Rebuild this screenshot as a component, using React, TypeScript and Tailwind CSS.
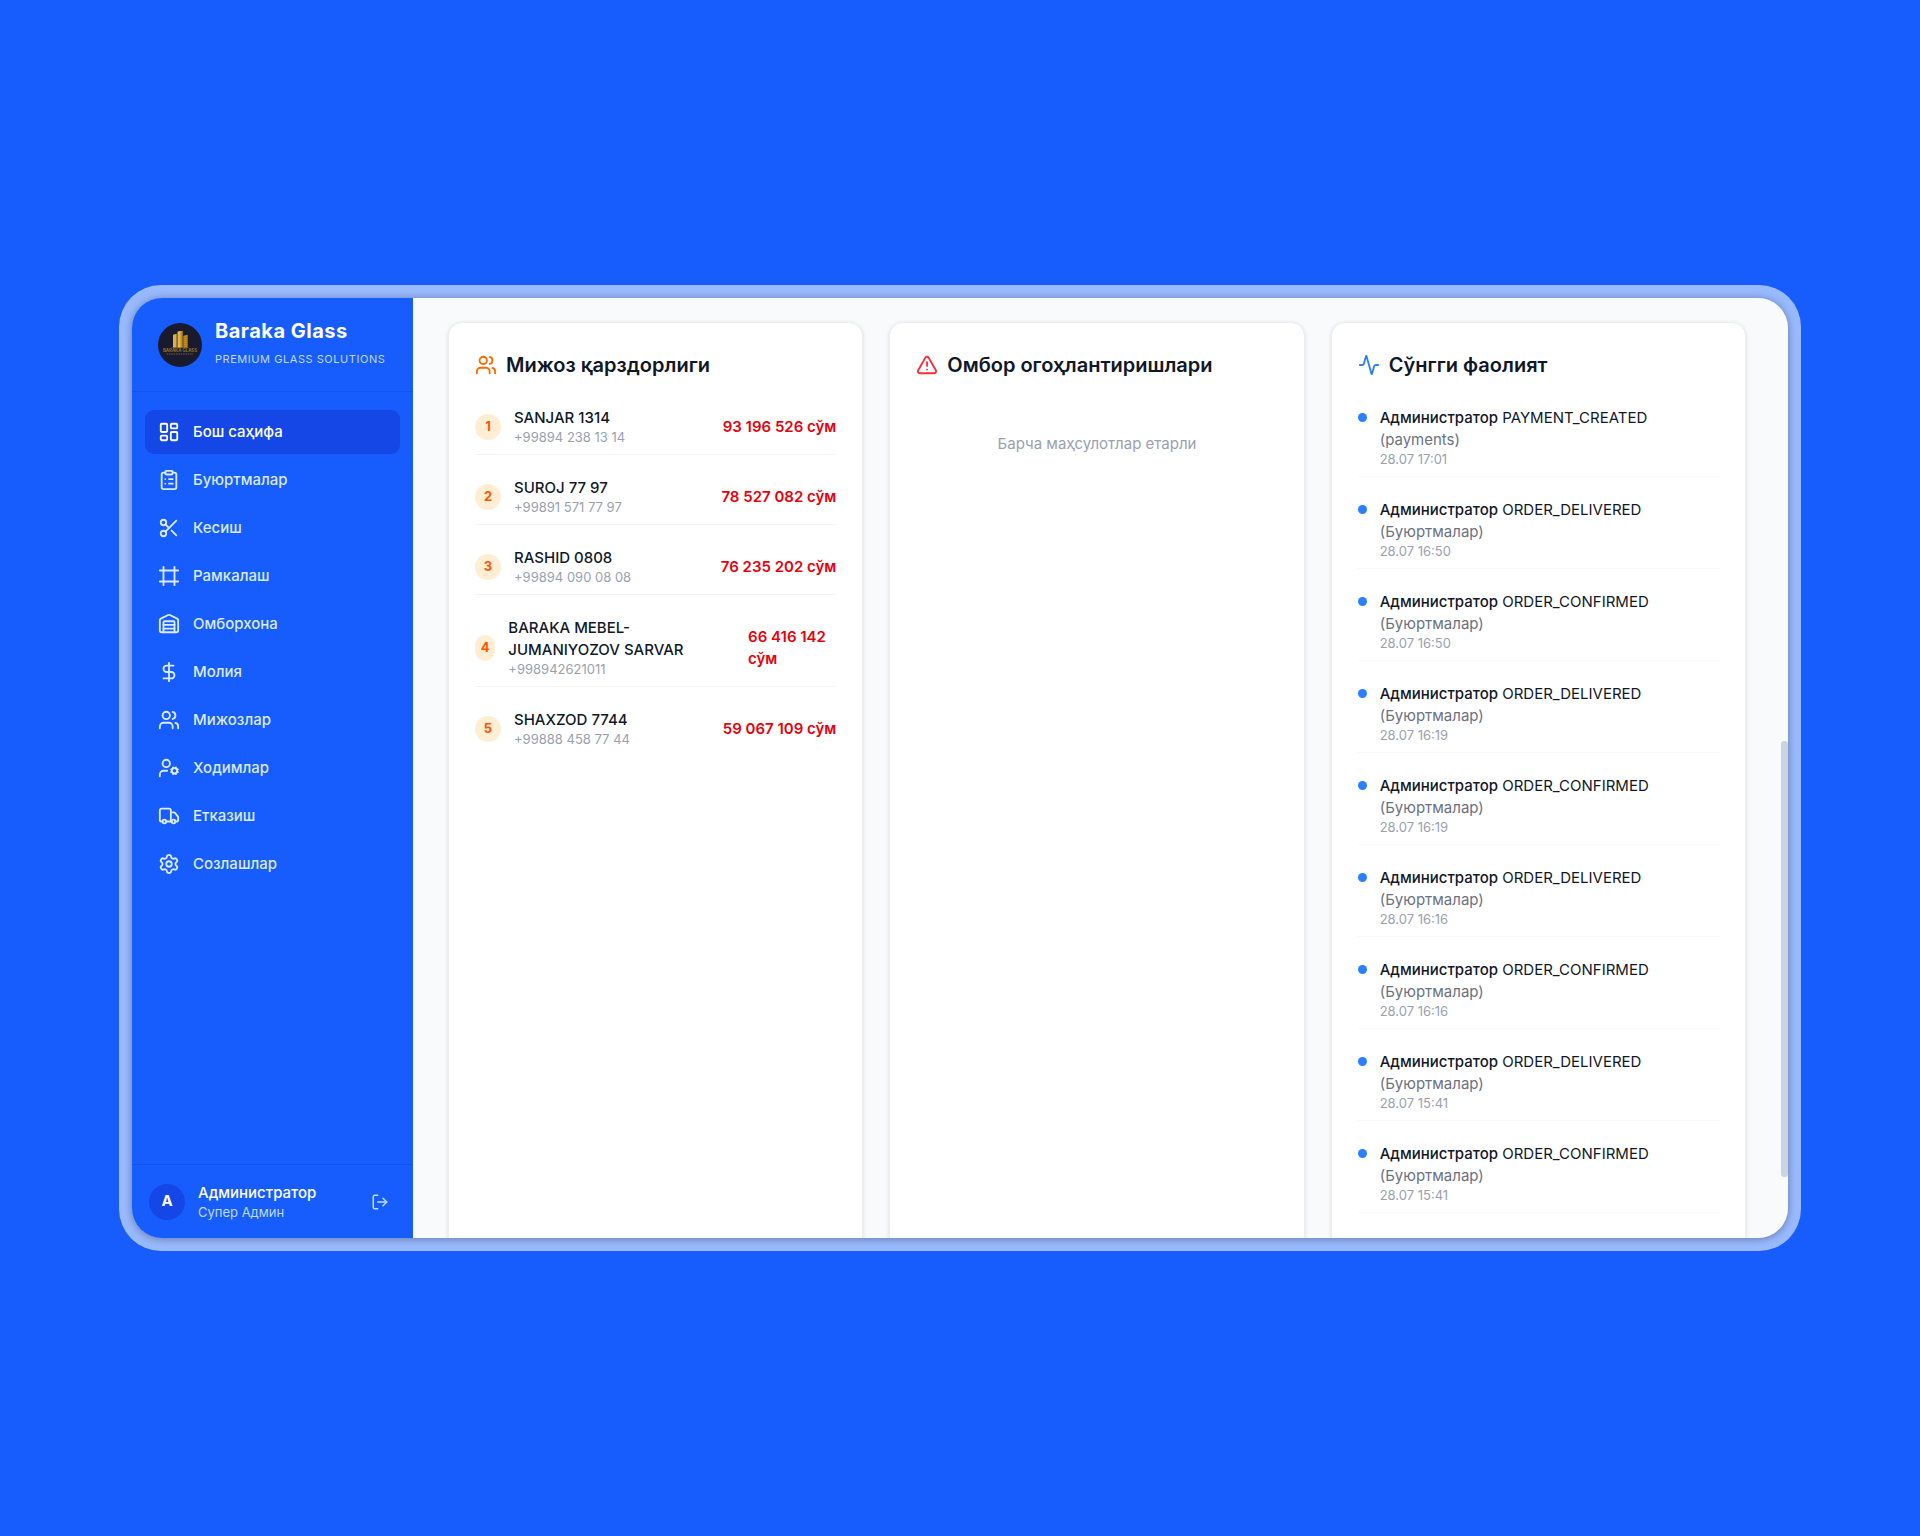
import {
  Activity,
  ClipboardList,
  DollarSign,
  Frame,
  LayoutDashboard,
  LogOut,
  Scissors,
  Settings,
  TriangleAlert,
  Truck,
  UserCog,
  Users,
  Warehouse,
} from 'lucide-react'

const navigation = [
  { name: 'Бош саҳифа', icon: LayoutDashboard, current: true },
  { name: 'Буюртмалар', icon: ClipboardList, current: false },
  { name: 'Кесиш', icon: Scissors, current: false },
  { name: 'Рамкалаш', icon: Frame, current: false },
  { name: 'Омборхона', icon: Warehouse, current: false },
  { name: 'Молия', icon: DollarSign, current: false },
  { name: 'Мижозлар', icon: Users, current: false },
  { name: 'Ходимлар', icon: UserCog, current: false },
  { name: 'Етказиш', icon: Truck, current: false },
  { name: 'Созлашлар', icon: Settings, current: false },
]

const debtors = [
  { name: 'SANJAR 1314', phone: '+99894 238 13 14', amount: '93 196 526 сўм' },
  { name: 'SUROJ 77 97', phone: '+99891 571 77 97', amount: '78 527 082 сўм' },
  { name: 'RASHID 0808', phone: '+99894 090 08 08', amount: '76 235 202 сўм' },
  { name: 'BARAKA MEBEL-JUMANIYOZOV SARVAR', phone: '+998942621011', amount: '66 416 142 сўм' },
  { name: 'SHAXZOD 7744', phone: '+99888 458 77 44', amount: '59 067 109 сўм' },
]

const activities = [
  { action: 'PAYMENT_CREATED', entity: 'payments', time: '28.07 17:01' },
  { action: 'ORDER_DELIVERED', entity: 'Буюртмалар', time: '28.07 16:50' },
  { action: 'ORDER_CONFIRMED', entity: 'Буюртмалар', time: '28.07 16:50' },
  { action: 'ORDER_DELIVERED', entity: 'Буюртмалар', time: '28.07 16:19' },
  { action: 'ORDER_CONFIRMED', entity: 'Буюртмалар', time: '28.07 16:19' },
  { action: 'ORDER_DELIVERED', entity: 'Буюртмалар', time: '28.07 16:16' },
  { action: 'ORDER_CONFIRMED', entity: 'Буюртмалар', time: '28.07 16:16' },
  { action: 'ORDER_DELIVERED', entity: 'Буюртмалар', time: '28.07 15:41' },
  { action: 'ORDER_CONFIRMED', entity: 'Буюртмалар', time: '28.07 15:41' },
]

function Logo() {
  return (
    <svg viewBox="0 0 132 132" className="size-11 shrink-0" aria-hidden="true">
      <circle cx="66" cy="66" r="66" fill="#1a1a2e" />
      <path d="M45 35l11-3v42H45z" fill="#d9b04a" />
      <path d="M59 26l15-3v51H59z" fill="#c9971f" />
      <path d="M59 26l8-2v50h-8z" fill="#e3bd5c" />
      <path d="M76 38l13-3v39H76z" fill="#c08c1c" />
      <path d="M63 32v36M70 30v38M80 42v26M85 42v26" stroke="#8a6414" strokeWidth="2" strokeDasharray="2 4" />
      <path d="M41 74h51" stroke="#8a6414" strokeWidth="2" />
      <text x="66" y="88" textAnchor="middle" fontSize="13" fontWeight="700" fill="#8f7230">BARAKA GLASS</text>
      <path d="M26 93h80" stroke="#6f5a2c" strokeWidth="3" strokeDasharray="5 2" />
    </svg>
  )
}

function Sidebar() {
  return (
    <aside className="flex w-[281px] shrink-0 flex-col bg-[#175dfe]">
      <div className="flex h-[94px] items-center gap-[13px] border-b border-[#1450ea] px-[26px]">
        <Logo />
        <div className="pb-1">
          <p className="text-[20px] leading-[24px] font-bold tracking-wide text-white">Baraka Glass</p>
          <p className="mt-[9px] text-[11px] leading-[14px] tracking-wider whitespace-nowrap text-[#bedbff] uppercase">
            Premium Glass Solutions
          </p>
        </div>
      </div>

      <nav className="flex flex-1 flex-col gap-1 px-[13px] pt-[18px]">
        {navigation.map((item) => (
          <a
            key={item.name}
            href="#"
            aria-current={item.current ? 'page' : undefined}
            className={
              item.current
                ? 'flex h-11 items-center gap-[13px] rounded-[9px] bg-[#1447e6] px-[13px] text-[15px] font-medium text-white'
                : 'flex h-11 items-center gap-[13px] rounded-[9px] px-[13px] text-[15px] font-medium text-[#dbeafe]'
            }
          >
            <item.icon className="size-[22px]" aria-hidden="true" />
            {item.name}
          </a>
        ))}
      </nav>

      <div className="flex h-[74px] items-center gap-[13px] border-t border-[#1450ea] px-[17px]">
        <div className="flex size-9 shrink-0 items-center justify-center rounded-full bg-[#1447e6] text-[15px] font-bold text-white">
          A
        </div>
        <div className="flex-1">
          <p className="text-[15px] leading-[22px] font-medium text-white">Администратор</p>
          <p className="text-[13px] leading-[17px] text-[#bedbff]">Супер Админ</p>
        </div>
        <button type="button" aria-label="Чиқиш" className="p-[7px] text-[#bedbff]">
          <LogOut className="size-[18px]" aria-hidden="true" />
        </button>
      </div>
    </aside>
  )
}

const card =
  'rounded-[14px] border border-[#eceef1] bg-white px-[26px] pt-[27px] pb-[70px] shadow-[0_1px_4px_rgba(0,0,0,0.12)]'
const cardTitle = 'mb-[18px] flex items-center gap-[9px] text-[20px] leading-[30px] font-semibold text-[#101828]'

export default function App() {
  return (
    <div className="flex min-h-screen items-center bg-[#175dfe] px-[119px] font-['Inter','Noto_Sans',sans-serif]">
      <div className="aspect-[1682/966] w-full rounded-[42px] bg-[#99baff] p-[13px]">
        <div className="relative flex h-full overflow-hidden rounded-[30px] shadow-[0_1px_9px_rgba(0,0,0,0.35)]">
          <Sidebar />

          <main className="grid min-w-0 flex-1 grid-cols-3 gap-[26px] overflow-hidden bg-[#f9fafb] pt-[24px] pr-[42px] pl-[35px]">
            <section className={card}>
              <h2 className={cardTitle}>
                <Users className="size-[22px] text-[#ff6900]" aria-hidden="true" />
                Мижоз қарздорлиги
              </h2>
              <ul className="flex flex-col gap-[13px]">
                {debtors.map((debtor, index) => (
                  <li
                    key={debtor.name}
                    className="flex items-center justify-between border-b border-[#f3f4f6] pt-[9px] pb-2 last:border-0"
                  >
                    <div className="flex items-center gap-[13px]">
                      <span className="flex h-[26px] w-[26px] items-center justify-center rounded-full bg-[#ffedd4] text-[13px] font-bold text-[#ff5500]">
                        {index + 1}
                      </span>
                      <div className="pr-2">
                        <p className="text-[15px] leading-[22px] font-medium text-[#101828]">{debtor.name}</p>
                        <p className="text-[13px] leading-[17px] text-[#99a1af]">{debtor.phone}</p>
                      </div>
                    </div>
                    <span className="text-[15px] leading-[22px] font-semibold text-[#e7000b]">{debtor.amount}</span>
                  </li>
                ))}
              </ul>
            </section>

            <section className={card}>
              <h2 className={cardTitle}>
                <TriangleAlert className="size-[22px] text-[#fb2c36]" aria-hidden="true" />
                Омбор огоҳлантиришлари
              </h2>
              <p className="py-[35px] text-center text-[15px] leading-[22px] text-[#99a1af]">
                Барча маҳсулотлар етарли
              </p>
            </section>

            <section className={card}>
              <h2 className={cardTitle}>
                <Activity className="size-[22px] text-[#2b7fff]" aria-hidden="true" />
                Сўнгги фаолият
              </h2>
              <ul className="flex flex-col gap-[13px]">
                {activities.map((activity, index) => (
                  <li key={index} className="flex items-start gap-[13px] border-b border-[#f7f8fa] pt-[9px] pb-2">
                    <span className="mt-[6px] size-[9px] shrink-0 rounded-full bg-[#2b7fff]" />
                    <div className="min-w-0 flex-1">
                      <p className="text-[15px] leading-[22px] text-[#101828]">
                        <span className="font-medium">Администратор</span> {activity.action}{' '}
                        <span className="block text-[#6a7282]">({activity.entity})</span>
                      </p>
                      <p className="text-[13px] leading-[17px] text-[#99a1af]">{activity.time}</p>
                    </div>
                  </li>
                ))}
              </ul>
            </section>
          </main>

          {/* scroll thumb */}
          <div className="absolute top-[443px] right-0 h-[436px] w-[7px] rounded-[3px] bg-[#cad5e2]" />
        </div>
      </div>
    </div>
  )
}
